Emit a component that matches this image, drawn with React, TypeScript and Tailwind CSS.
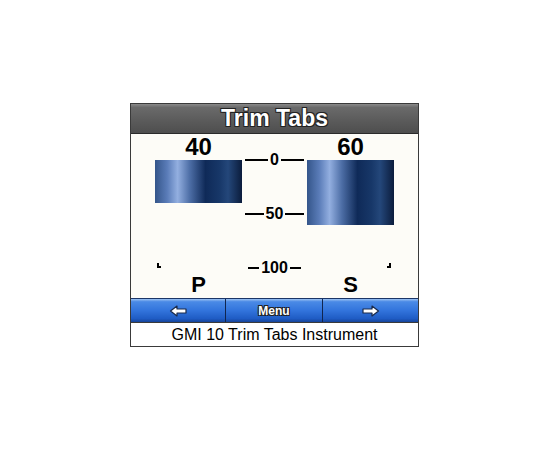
const outline = "[text-shadow:-1px_-1px_0_#222,1px_-1px_0_#222,-1px_1px_0_#222,1px_1px_0_#222]";

function Arrow({ dir }: { dir: "left" | "right" }) {
  return (
    <svg width="18" height="12" viewBox="0 0 18 12" className={dir === "right" ? "" : "-scale-x-100"}>
      <polygon
        points="1,4 10,4 10,1 16.5,6 10,11 10,8 1,8"
        fill="#fff"
        stroke="#1a2a4a"
        strokeWidth="1.2"
        strokeLinejoin="round"
      />
    </svg>
  );
}

function ScaleMark({ label, width }: { label: string; width: string }) {
  return (
    <div className={`flex items-center gap-[2px] h-[14px] ${width}`}>
      <div className="flex-1 h-[2px] bg-black" />
      <span className="text-[16px] font-bold leading-none text-black">{label}</span>
      <div className="flex-1 h-[2px] bg-black" />
    </div>
  );
}

function TabColumn({ value, side }: { value: number; side: "P" | "S" }) {
  return (
    <div className="w-[87px] flex flex-col">
      <div className="h-[26px] flex items-end justify-center text-[24px] font-bold leading-none text-black pb-[1px]">
        {value}
      </div>
      <div
        className="w-full bg-[linear-gradient(90deg,#34558a_0%,#5a7cb8_14%,#93afe0_26%,#4d6ea6_40%,#0f2a58_58%,#173768_74%,#24477a_84%,#0b1c3c_100%)]"
        style={{ height: `${Math.round(value * 1.08)}px` }}
      />
      <div className="flex-1" />
      <div className={`flex ${side === "P" ? "justify-start pl-[2px]" : "justify-end pr-[3px]"}`}>
        <div
          className={`w-[4px] h-[5px] border-b-2 border-black ${side === "P" ? "border-l-2" : "border-r-2"}`}
        />
      </div>
      <div className="h-[30px] flex items-center justify-center text-[22px] font-bold leading-none text-black pt-[4px]">
        {side}
      </div>
    </div>
  );
}

export default function App() {
  return (
    <div className="w-[550px] h-[450px] bg-white font-['Liberation_Sans',Arial,sans-serif] pt-[103px] pl-[130px]">
      <div className="w-[289px] border border-[#3a3a3a] flex flex-col">
        {/* title */}
        <div className="h-[30px] bg-[linear-gradient(180deg,#8a8a8a_0%,#6a6a6a_12%,#5a5a5a_60%,#4e4e4e_100%)] border-b border-[#2a2a2a] flex items-center justify-center">
          <span className={`text-white text-[23px] font-bold leading-none ${outline}`}>Trim Tabs</span>
        </div>

        {/* gauges */}
        <div className="h-[164px] bg-[#fdfcf7] flex pl-[24px]">
          <TabColumn value={40} side="P" />
          <div className="w-[65px] flex flex-col items-center pt-[19px] gap-[40px]">
            <ScaleMark label="0" width="w-[59px]" />
            <ScaleMark label="50" width="w-[59px]" />
            <ScaleMark label="100" width="w-[53px]" />
          </div>
          <TabColumn value={60} side="S" />
        </div>

        {/* soft keys */}
        <div className="h-[24px] border-t border-[#1b3566] bg-[linear-gradient(180deg,#9cc2f2_0%,#4a8ae6_12%,#3274dc_50%,#1f5cc4_85%,#16449a_100%)] grid grid-cols-[95px_97px_1fr]">
          <div className="flex items-center justify-center border-r border-[#10254f]">
            <Arrow dir="left" />
          </div>
          <div className="flex items-center justify-center border-r border-[#10254f]">
            <span className={`text-white text-[12px] font-bold leading-none ${outline}`}>Menu</span>
          </div>
          <div className="flex items-center justify-center">
            <Arrow dir="right" />
          </div>
        </div>

        {/* caption */}
        <div className="h-[24px] bg-white border-t border-[#3a3a3a] flex items-center justify-center text-[16px] text-black leading-none">
          GMI 10 Trim Tabs Instrument
        </div>
      </div>
    </div>
  );
}
